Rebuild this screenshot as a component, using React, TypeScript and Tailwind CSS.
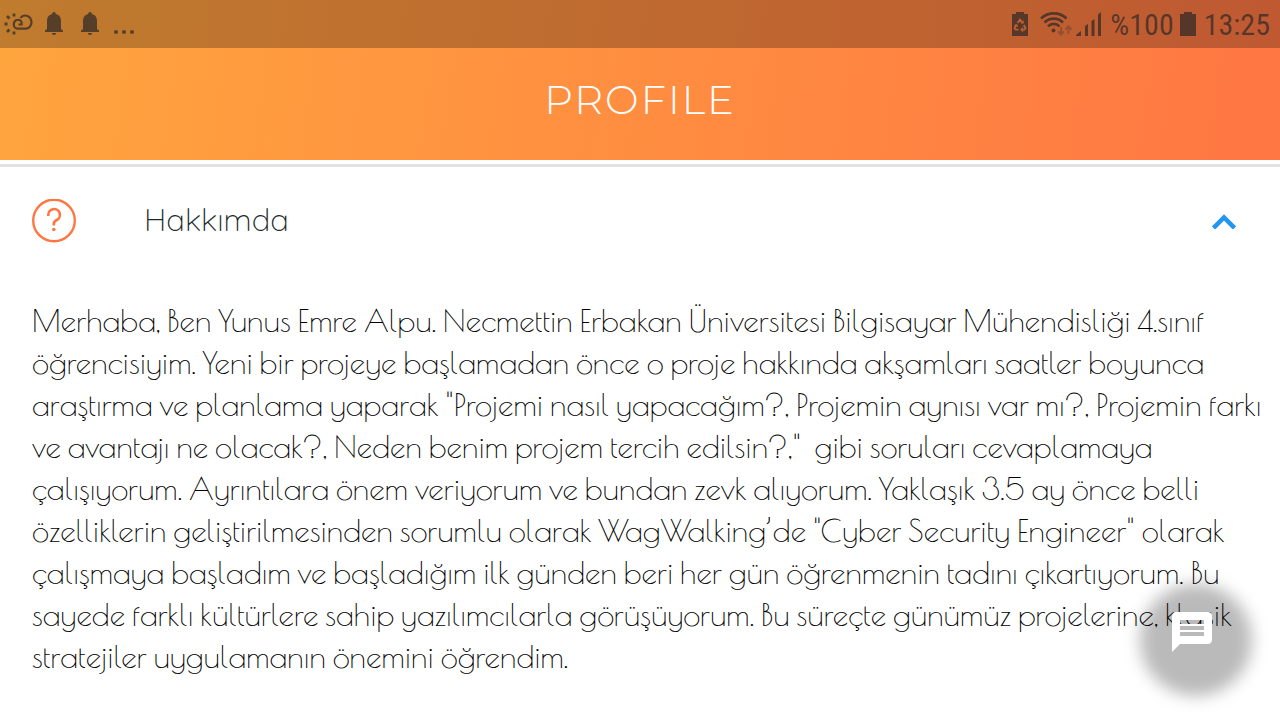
import React from "react";

const aboutLines: string[] = [
  "Merhaba, Ben Yunus Emre Alpu. Necmettin Erbakan Üniversitesi Bilgisayar Mühendisliği 4.sınıf",
  "öğrencisiyim. Yeni bir projeye başlamadan önce o proje hakkında akşamları saatler boyunca",
  "araştırma ve planlama yaparak \"Projemi nasıl yapacağım?, Projemin aynısı var mı?, Projemin farkı",
  "ve avantajı ne olacak?, Neden benim projem tercih edilsin?,\"\u00a0 gibi soruları cevaplamaya",
  "çalışıyorum. Ayrıntılara önem veriyorum ve bundan zevk alıyorum. Yaklaşık 3.5 ay önce belli",
  "özelliklerin geliştirilmesinden sorumlu olarak WagWalking’de \"Cyber Security Engineer\" olarak",
  "çalışmaya başladım ve başladığım ilk günden beri her gün öğrenmenin tadını çıkartıyorum. Bu",
  "sayede farklı kültürlere sahip yazılımcılarla görüşüyorum. Bu süreçte günümüz projelerine, klasik",
  "stratejiler uygulamanın önemini öğrendim.",
];

function WeatherIcon() {
  return (
    <svg width="29" height="22" viewBox="0 0 29 22" fill="none" stroke="currentColor" strokeWidth="2.200" aria-hidden="true">
      <path d="M14.500 11.500h3.200c.5-3.200-2-5-4-4.700-2.600.3-3.900 2.400-3.900 4.600 0 2.900 2.200 4.300 4.400 4.300h7.500c3.300 0 5.800-2.800 5.800-6.500s-2.800-6.700-6.300-6.700c-2.300 0-3.700 1-4.700 2.500" />
      <path d="M10 .5v3M10 18.500v3M.5 11h3M3 3l2.500 2.500M3 19l2.500-2.500" strokeWidth="2.800" />
    </svg>
  );
}

function BellIcon() {
  return (
    <svg width="18" height="24" viewBox="0 0 18 24" fill="currentColor" aria-hidden="true">
      <path d="M9 0a2 2 0 0 1 1.900 2.100C14.500 3 16 5.500 16 9v8l2 1.500V20H0v-1.500L2 17V9c0-3.500 1.500-6 5.100-6.900A2 2 0 0 1 9 0ZM6.800 21h4.400a2.200 2 0 0 1-4.400 0Z" />
    </svg>
  );
}

function BatteryIcon({ recycle = false }: { recycle?: boolean }) {
  return (
    <svg width="16" height="24" viewBox="0 0 16 24" fill="currentColor" aria-hidden="true">
      <path d="M4 0h8v2h4v22H0V2h4Z" />
      {recycle && (
        <g fill="none" stroke="#bf6030" strokeWidth="1.800">
          <path d="M5.500 11 8 7.500l2.500 3.500M11.800 13l1.700 3.200-1 1.500H10M6.500 17.700h-3l-1-1.500 1.700-3.200" />
          <path d="M8.800 11h2.400V8.600M11 15.700l-2 2 2 2M2.500 13.500l2.200-.8.800 2.300" strokeWidth="1.200" />
        </g>
      )}
    </svg>
  );
}

function WifiIcon() {
  return (
    <svg width="32" height="25" viewBox="0 0 32 25" fill="none" stroke="currentColor" strokeWidth="2.600" aria-hidden="true">
      <path d="M1 6.500a18.500 18.500 0 0 1 25.500 0M4.500 10.500a13 13 0 0 1 18.500 0M8 14.300a8 8 0 0 1 11.500 0" />
      <circle cx="13.500" cy="18.500" r="2" fill="currentColor" stroke="none" />
      <path d="M21 15v7M18 19.500l3 3 3-3M28.500 22v-7M25.500 17.500l3-3 3 3" strokeWidth="2" opacity=".4" />
    </svg>
  );
}

function SignalIcon() {
  return (
    <svg width="26" height="24" viewBox="0 0 26 24" fill="currentColor" aria-hidden="true">
      <path d="M0 24v-1l5-4v5ZM9 24V14l3-2v12ZM15.500 24V9l3-2v17ZM22 24V2.500L25 0v24Z" />
    </svg>
  );
}

function StatusBar() {
  return (
    <div className="flex h-12 items-center justify-between bg-black/25 px-1 font-['Roboto_Condensed',Roboto,sans-serif] text-[#2a2726]/70">
      <div className="flex items-center">
        <WeatherIcon />
        <div className="ml-3 flex gap-4.5">
          <BellIcon />
          <BellIcon />
        </div>
        <svg className="mt-4 ml-3.5" width="22" height="6" viewBox="0 0 22 6" fill="currentColor" aria-hidden="true">
          <circle cx="3" cy="3" r="2" />
          <circle cx="11" cy="3" r="2" />
          <circle cx="19" cy="3" r="2" />
        </svg>
      </div>
      <div className="flex items-center pr-1.5">
        <BatteryIcon recycle />
        <div className="ml-3 flex items-center gap-1">
          <WifiIcon />
          <SignalIcon />
        </div>
        <span className="ml-2 pt-0.5 text-[30px] leading-8">%100</span>
        <span className="mr-2 ml-1.5">
          <BatteryIcon />
        </span>
        <span className="pt-0.5 text-[30px] leading-8">13:25</span>
      </div>
    </div>
  );
}

export default function App() {
  return (
    <div className="min-h-screen overflow-x-hidden bg-white font-[Lato,sans-serif]">
      <header className="bg-linear-[98deg] from-[#ffa53e] to-[#ff7643]">
        <StatusBar />
        <div className="flex h-28 items-center justify-center pb-2">
          <h1 className="font-[Montserrat,Lato,sans-serif] text-[40px] leading-12 font-light tracking-wider text-white">PROFILE</h1>
        </div>
      </header>
      <main className="mt-1 border-t-3 border-[#e3e3e3]">
        <button type="button" aria-expanded="true" aria-controls="about" className="flex w-full items-center px-8 py-8 text-left">
          <svg width="44" height="44" viewBox="0 0 44 44" fill="none" stroke="#ff7643" strokeWidth="2.400" aria-hidden="true">
            <circle cx="22" cy="21.500" r="20.800" />
            <path d="M16.300 17v-1a5.800 5.800 0 1 1 8.500 5c-2 1-3 2-3 4V26.500" strokeWidth="2.600" />
            <circle cx="21.800" cy="30.500" r="1.800" fill="#ff7643" stroke="none" />
          </svg>
          <span className="ml-17 flex-1 pb-0.5 font-[Quicksand,Lato,sans-serif] text-[31px] leading-9 font-light text-[#1c2c2c]">Hakkımda</span>
          <svg className="mr-3" width="24" height="16" viewBox="0 0 24 16" fill="none" stroke="#2196f3" strokeWidth="4.500" aria-hidden="true">
            <path d="M1.500 15 12 4.500 22.500 15" />
          </svg>
        </button>
        <p id="about" className="px-8 pt-6 pb-10 font-['Poiret_One',Lato,sans-serif] text-[31px] leading-[42px] font-light whitespace-nowrap text-black [font-variant-ligatures:none]">
          {aboutLines.map((line) => (
            <React.Fragment key={line}>
              {line}
              <br />
            </React.Fragment>
          ))}
        </p>
      </main>
      <button type="button" aria-label="Mesaj" className="fixed right-6 bottom-5 size-30 text-white">
        <span className="absolute inset-1 rounded-full bg-black/27 blur-[8px]" />
        <svg className="absolute top-7 left-8" width="48" height="48" viewBox="0 0 24 24" fill="currentColor" aria-hidden="true">
          <path d="M20 2H4c-1.100 0-1.990.9-1.990 2L2 22l4-4h14c1.100 0 2-.9 2-2V4c0-1.100-.9-2-2-2zm-2 12H6v-2h12v2zm0-3H6V9h12v2zm0-3H6V6h12v2z" />
        </svg>
      </button>
    </div>
  );
}
